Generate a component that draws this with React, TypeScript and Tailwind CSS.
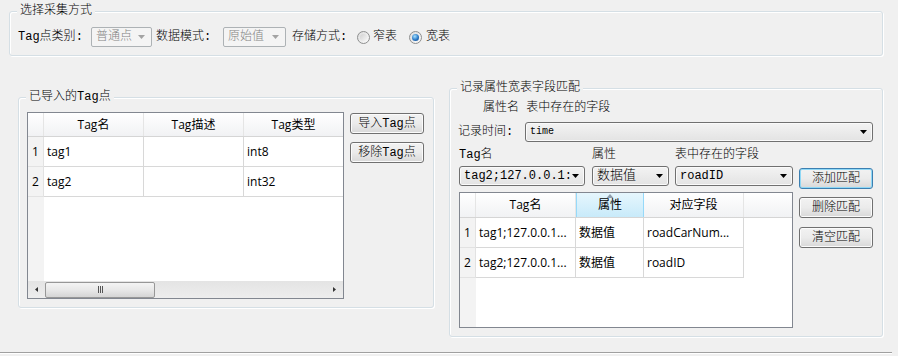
import React from "react";

// SimSun-like labels use a monospace Latin face; grid cells use a UI sans.
const SIM = "font-['Liberation_Mono','Noto_Sans_CJK_SC',monospace]";
const UI = "font-['Open_Sans','Noto_Sans_CJK_SC',sans-serif]";

// Latin runs stay at regular weight; the CJK around them is set light to feel like SimSun.
function L({ children }: { children: React.ReactNode }) {
  return <span className="font-normal">{children}</span>;
}

function GroupBox({
  title,
  className,
  children,
}: {
  title: React.ReactNode;
  className: string;
  children?: React.ReactNode;
}) {
  return (
    <div
      className={`relative rounded-[3px] border border-[#d5dfe5] shadow-[inset_1px_1px_0_#fff,1px_1px_0_#fff] ${className}`}
    >
      <span
        className={`absolute -top-[9px] left-[7px] bg-[#f0f0f0] px-[3px] text-[12px] leading-[16px] ${SIM}`}
      >
        {title}
      </span>
      {children}
    </div>
  );
}

function Arrow({ color = "#000" }: { color?: string }) {
  return (
    <svg width="7" height="4" viewBox="0 0 7 4" className="shrink-0">
      <polygon points="0,0 7,0 3.5,4" fill={color} />
    </svg>
  );
}

function Combo({
  text,
  className,
  disabled,
  textClass = "text-[12px] font-normal",
}: {
  text: string;
  className: string;
  disabled?: boolean;
  textClass?: string;
}) {
  if (disabled) {
    return (
      <div
        className={`flex h-[20px] items-center rounded-[2px] border border-[#adb2b5] bg-[#f4f4f4] pl-[4px] pr-[6px] text-[#838383] ${className}`}
      >
        <span className="text-[12px] leading-[16px]">{text}</span>
        <span className="ml-auto">
          <Arrow color="#a3a3a3" />
        </span>
      </div>
    );
  }
  return (
    <div
      className={`flex h-[20px] items-center rounded-[3px] border border-[#707070] bg-gradient-to-b from-[#f3f3f3] to-[#e3e3e3] pl-[4px] pr-[5px] shadow-[inset_0_0_0_1px_#fafafa] ${className}`}
    >
      <span className={`${SIM} leading-[16px] whitespace-nowrap ${textClass}`}>{text}</span>
      <span className="ml-auto">
        <Arrow />
      </span>
    </div>
  );
}

function Button({ children, focused }: { children: React.ReactNode; focused?: boolean }) {
  return (
    <div
      className={`flex h-[21px] w-[74px] items-center justify-center rounded-[3px] border bg-gradient-to-b from-[#f2f2f2] via-[#ebebeb] to-[#d8d8d8] text-[12px] leading-[16px] ${SIM} ${
        focused
          ? "border-[#3c7fb1] shadow-[inset_0_0_0_1px_#8fd8f6]"
          : "border-[#707070] shadow-[inset_0_0_0_1px_#fbfbfb]"
      }`}
    >
      {children}
    </div>
  );
}

function Radio({ checked }: { checked?: boolean }) {
  return (
    <span className="flex h-[13px] w-[13px] shrink-0 items-center justify-center rounded-full border border-[#8e8f8f] bg-gradient-to-br from-[#dcdcdc] to-[#fbfbfb]">
      {checked ? (
        <span className="h-[7px] w-[7px] rounded-full bg-[radial-gradient(circle_at_40%_35%,#a6e1ff,#2a79c6_55%,#0d3f7d)]" />
      ) : (
        <span className="h-[7px] w-[7px] rounded-full bg-gradient-to-br from-[#d2d2d2] to-[#f6f6f6]" />
      )}
    </span>
  );
}

type Col = { title: string; w: string; sorted?: boolean };

function Grid({
  cols,
  rows,
  className,
  headerH,
  scroll,
}: {
  cols: Col[];
  rows: string[][];
  className: string;
  headerH: string;
  scroll?: boolean;
}) {
  return (
    <div className={`flex flex-col overflow-hidden border border-[#828790] bg-white font-normal ${UI} ${className}`}>
      <div className={`flex shrink-0 border-b border-[#d5d5d5] bg-gradient-to-b from-white to-[#f1f2f4] ${headerH}`}>
        <div className="w-[16px] shrink-0 border-r border-[#e5e5e5]" />
        {cols.map((c) => (
          <div
            key={c.title}
            className={`relative flex shrink-0 items-center justify-center text-[12px] ${c.w} ${
              c.sorted
                ? "border-x border-[#96d9f9] bg-gradient-to-b from-[#e6f6fd] to-[#c8eafa]"
                : "border-r border-[#e5e5e5]"
            }`}
          >
            {c.sorted && (
              <svg width="7" height="4" viewBox="0 0 7 4" className="absolute left-1/2 top-[1px] -translate-x-1/2">
                <polygon points="0,4 3.5,0 7,4" fill="#8e9cab" />
              </svg>
            )}
            {c.title}
          </div>
        ))}
      </div>
      {rows.map((r, i) => (
        <div key={i} className="flex h-[30px] shrink-0">
          <div className="flex w-[16px] shrink-0 items-center justify-center border-b border-r border-[#e2e2e2] bg-[#f3f3f3] text-[12px]">
            {i + 1}
          </div>
          {r.map((cell, j) => (
            <div
              key={j}
              className={`flex shrink-0 items-center overflow-hidden whitespace-nowrap border-b border-r border-[#d8d8d8] pl-[3px] text-[12px] ${cols[j].w}`}
            >
              {cell}
            </div>
          ))}
        </div>
      ))}
      <div className="flex flex-1">
        <div className="w-[16px] shrink-0 bg-[#f3f3f3]" />
        <div className="flex-1 bg-white" />
      </div>
      {scroll && (
        <div className="flex h-[17px] shrink-0 items-center bg-gradient-to-b from-[#e4e4e4] to-[#ededed]">
          <div className="flex w-[17px] items-center justify-center">
            <svg width="3" height="5" viewBox="0 0 3 5">
              <polygon points="3,0 3,5 0,2.5" fill="#333" />
            </svg>
          </div>
          <div className="flex h-[16px] w-[110px] items-center justify-center rounded-[2px] border border-[#979797] bg-gradient-to-b from-[#f4f4f4] via-[#e8e8e8] to-[#d5d5d5]">
            <div className="flex gap-[1px]">
              <span className="h-[7px] w-[1px] bg-[#555]" />
              <span className="h-[7px] w-[1px] bg-[#555]" />
              <span className="h-[7px] w-[1px] bg-[#555]" />
            </div>
          </div>
          <div className="ml-auto flex w-[17px] items-center justify-center">
            <svg width="3" height="5" viewBox="0 0 3 5">
              <polygon points="0,0 0,5 3,2.5" fill="#333" />
            </svg>
          </div>
        </div>
      )}
    </div>
  );
}

export default function App() {
  return (
    <div className={`h-[356px] w-[898px] overflow-hidden bg-[#f0f0f0] text-[12px] font-light text-black ${SIM}`}>
      <div className="pl-[9px] pt-[11px]">
        <GroupBox title="选择采集方式" className="h-[45px] w-[874px]">
          <div className="mt-[15px] flex h-[20px] items-center pl-[8px] leading-[16px]">
            <span className="w-[73px]">
              <L>Tag</L>点类别<L>:</L>
            </span>
            <Combo className="w-[61px]" disabled text="普通点" />
            <span className="ml-[4px] w-[67px]">
              数据模式<L>:</L>
            </span>
            <Combo className="w-[63px]" disabled text="原始值" />
            <span className="ml-[6px] w-[65px]">
              存储方式<L>:</L>
            </span>
            <Radio />
            <span className="ml-[3px] w-[36px]">窄表</span>
            <Radio checked />
            <span className="ml-[4px]">宽表</span>
          </div>
        </GroupBox>
      </div>

      <div className="mt-[32px] flex items-start pl-[18px]">
        <GroupBox
          title={
            <>
              已导入的<L>Tag</L>点
            </>
          }
          className="mt-[9px] h-[211px] w-[416px]"
        >
          <div className="flex items-start pl-[8px] pt-[14px]">
            <Grid
              className="h-[187px] w-[317px]"
              headerH="h-[24px]"
              scroll
              cols={[
                { title: "Tag名", w: "w-[100px]" },
                { title: "Tag描述", w: "w-[100px]" },
                { title: "Tag类型", w: "w-[100px]" },
              ]}
              rows={[
                ["tag1", "", "int8"],
                ["tag2", "", "int32"],
              ]}
            />
            <div className="ml-[6px] mt-[1px] flex flex-col gap-[8px]">
              <Button>
                导入<L>Tag</L>点
              </Button>
              <Button>
                移除<L>Tag</L>点
              </Button>
            </div>
          </div>
        </GroupBox>

        <GroupBox title="记录属性宽表字段匹配" className="ml-[15px] h-[249px] w-[434px]">
          <div className="flex flex-col leading-[16px]">
            <div className="mt-[11px] h-[16px] pl-[33px]">属性名 表中存在的字段</div>
            <div className="mt-[6px] flex h-[20px] items-center pl-[8px]">
              <span className="w-[67px]">
                记录时间<L>:</L>
              </span>
              <Combo className="w-[348px]" text="time" textClass="text-[10px] font-normal" />
            </div>
            <div className="mt-[5px] flex h-[16px] pl-[9px]">
              <span className="w-[133px]">
                <L>Tag</L>名
              </span>
              <span className="w-[83px]">属性</span>
              <span>表中存在的字段</span>
            </div>
            <div className="mt-[3px] flex items-start pl-[9px]">
              <Combo className="w-[126px]" text="tag2;127.0.0.1:" />
              <Combo className="ml-[7px] w-[77px]" text="数据值" textClass="text-[13px]" />
              <Combo className="ml-[6px] w-[118px]" text="roadID" />
              <div className="ml-[6px] mt-[2px]">
                <Button focused>添加匹配</Button>
              </div>
            </div>
            <div className="mt-[3px] flex items-start pl-[9px]">
              <Grid
                className="h-[136px] w-[334px]"
                headerH="h-[25px]"
                cols={[
                  { title: "Tag名", w: "w-[100px]" },
                  { title: "属性", w: "w-[68px]", sorted: true },
                  { title: "对应字段", w: "w-[100px]" },
                ]}
                rows={[
                  ["tag1;127.0.0.1...", "数据值", "roadCarNum..."],
                  ["tag2;127.0.0.1...", "数据值", "roadID"],
                ]}
              />
              <div className="ml-[6px] mt-[5px] flex flex-col gap-[9px]">
                <Button>删除匹配</Button>
                <Button>清空匹配</Button>
              </div>
            </div>
          </div>
        </GroupBox>
      </div>

      <div className="mt-[15px] h-[1px] w-[892px] bg-[#a0a0a0]" />
      <div className="h-[1px] w-[892px] bg-white" />
    </div>
  );
}
